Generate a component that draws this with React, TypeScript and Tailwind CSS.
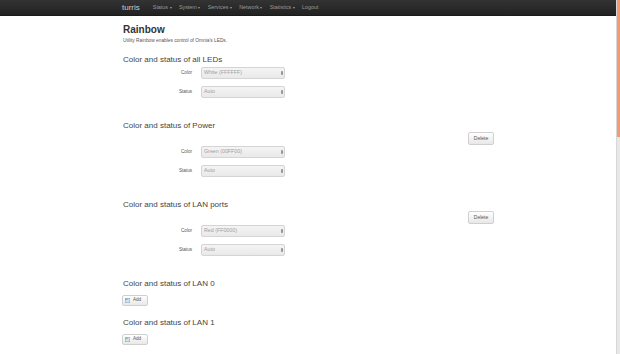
const font = { fontFamily: '"Liberation Sans", Arial, sans-serif' };

const menu = ['Status', 'System', 'Services', 'Network', 'Statistics'];

const ledSections = [
  { title: 'Color and status of all LEDs', color: 'White (FFFFFF)', removable: false },
  { title: 'Color and status of Power', color: 'Green (00FF00)', removable: true },
  { title: 'Color and status of LAN ports', color: 'Red (FF0000)', removable: true },
];

const emptySections = ['Color and status of LAN 0', 'Color and status of LAN 1'];

function Caret() {
  return (
    <span className="ml-[1.5px] inline-block h-0 w-0 border-x-[1.5px] border-t-[2px] border-x-transparent border-t-[#999] align-middle" />
  );
}

function Select({ value }: { value: string }) {
  return (
    <div className="flex h-[12px] w-[84px] items-center justify-between rounded-[2px] border border-[#d4d4d4] bg-gradient-to-b from-[#f4f4f4] to-[#e9e9e9] pl-[2px] pr-[1px]">
      <span className="text-[5.3px] leading-none text-[#a0a0a0]">{value}</span>
      <svg width="2" height="6" viewBox="0 0 2 6">
        <path d="M0 2.5 L1 1 L2 2.5 Z" fill="#222" />
        <path d="M0 3.5 L1 5 L2 3.5 Z" fill="#222" />
      </svg>
    </div>
  );
}

function Field({ label, value }: { label: string; value: string }) {
  return (
    <div className="flex items-center gap-[9px]">
      <span className="w-[69px] text-right text-[4.6px] leading-none text-[#555]">{label}</span>
      <Select value={value} />
    </div>
  );
}

function Heading({ children }: { children: string }) {
  return <h3 className="h-[10px] text-[8px] leading-[10px] text-[#444]">{children}</h3>;
}

export default function App() {
  return (
    <div className="flex h-[354px] w-[620px] overflow-hidden bg-white" style={font}>
      <div className="w-[616px]">
        <nav className="flex h-[16px] items-center border-b border-[#1a1a1a] bg-gradient-to-b from-[#333] to-[#222] pl-[122px]">
          <span className="text-[8px] leading-none text-[#ccc]">turris</span>
          <div className="ml-[13px] flex items-center gap-[7.3px] text-[5.4px] leading-none text-[#999]">
            {menu.map((m) => (
              <span key={m} className="flex items-center">
                {m}
                <Caret />
              </span>
            ))}
            <span>Logout</span>
          </div>
        </nav>

        <main className="w-[371px] pl-[123px] box-content">
          <div className="pt-[8px]">
            <h2 className="h-[12px] text-[10px] font-bold leading-[12px] text-[#333]">Rainbow</h2>
            <p className="mt-[2px] h-[6px] text-[4.8px] leading-[6px] text-[#555]">
              Utility Rainbow enables control of Omnia's LEDs.
            </p>
          </div>

          <div className="mt-[11px] flex flex-col gap-[23px]">
            {ledSections.map((s) => (
              <section key={s.title}>
                <Heading>{s.title}</Heading>
                {s.removable && (
                  <div className="mt-[1px] flex justify-end">
                    <button className="h-[13px] w-[26px] rounded-[2px] border border-[#d0d0d0] bg-gradient-to-b from-white to-[#e8e8e8] text-[5px] leading-none text-[#555]">
                      Delete
                    </button>
                  </div>
                )}
                <div className={`${s.removable ? 'mt-[1px]' : 'mt-[2px]'} flex flex-col gap-[7px]`}>
                  <Field label="Color" value={s.color} />
                  <Field label="Status" value="Auto" />
                </div>
              </section>
            ))}

            <div className="flex flex-col gap-[12px]">
              {emptySections.map((t) => (
                <section key={t}>
                  <Heading>{t}</Heading>
                  <button className="ml-[-1px] mt-[6px] flex h-[11px] w-[26px] items-center gap-[3px] rounded-[2px] border border-[#d0d0d0] bg-gradient-to-b from-white to-[#e8e8e8] pl-[2px] text-[4.6px] leading-none text-[#555]">
                    <svg width="5" height="5" viewBox="0 0 5 5">
                      <rect x="0.25" y="0.25" width="4.5" height="4.5" fill="#cfe3f2" stroke="#7aa6c8" strokeWidth="0.5" />
                      <rect x="0.5" y="0.5" width="2" height="1.5" fill="#7fb97a" />
                    </svg>
                    Add
                  </button>
                </section>
              ))}
            </div>
          </div>
        </main>
      </div>

      <div className="flex w-[4px] flex-col border-l border-[#d8d8d8] bg-[#e8e8e8]">
        <div className="h-[137px] bg-[#f09a78]" />
      </div>
    </div>
  );
}
